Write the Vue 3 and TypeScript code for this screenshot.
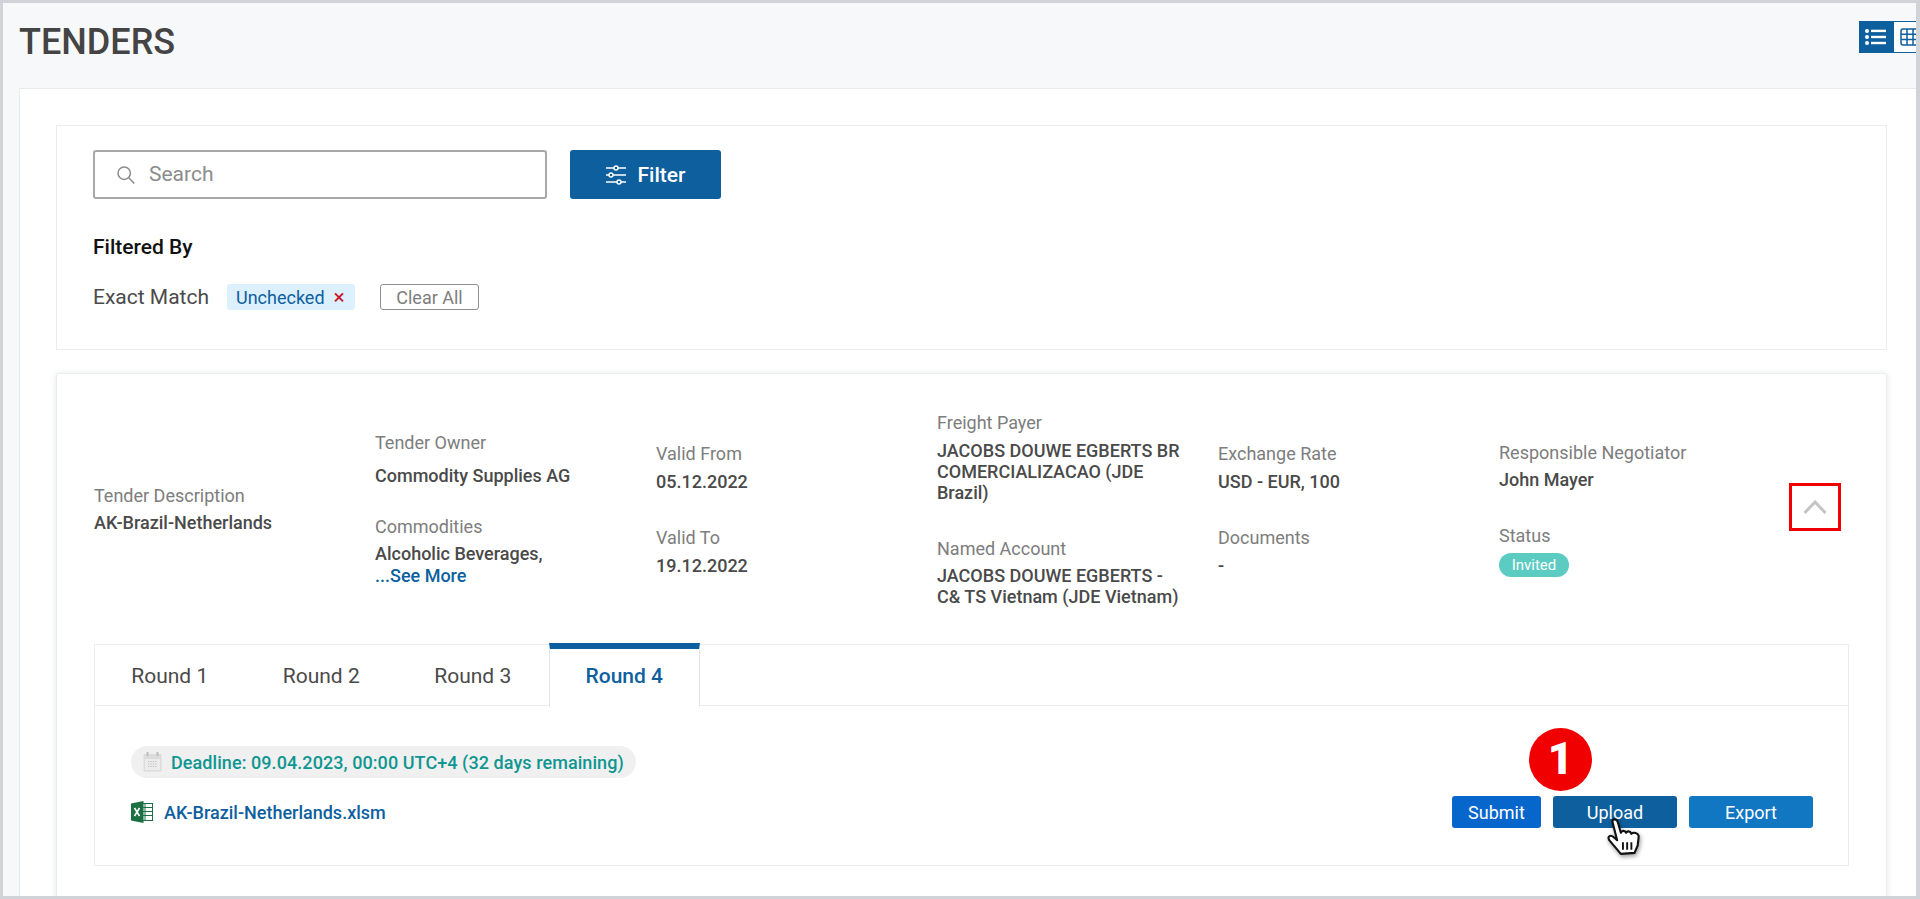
<script setup lang="ts">
import { ref } from "vue";

type Field = { label: string; lines: string[]; more?: string; pill?: string };

const columns: { id: string; gap: string; fields: Field[] }[] = [
  { id: "desc", gap: "0", fields: [{ label: "Tender Description", lines: ["AK-Brazil-Netherlands"] }] },
  {
    id: "owner",
    gap: "gap-a",
    fields: [
      { label: "Tender Owner", lines: ["Commodity Supplies AG"] },
      { label: "Commodities", lines: ["Alcoholic Beverages,"], more: "...See More" }
    ]
  },
  {
    id: "valid",
    gap: "gap-b",
    fields: [
      { label: "Valid From", lines: ["05.12.2022"] },
      { label: "Valid To", lines: ["19.12.2022"] }
    ]
  },
  {
    id: "payer",
    gap: "gap-c",
    fields: [
      { label: "Freight Payer", lines: ["JACOBS DOUWE EGBERTS BR", "COMERCIALIZACAO (JDE", "Brazil)"] },
      { label: "Named Account", lines: ["JACOBS DOUWE EGBERTS -", "C& TS Vietnam (JDE Vietnam)"] }
    ]
  },
  {
    id: "rate",
    gap: "gap-b",
    fields: [
      { label: "Exchange Rate", lines: ["USD - EUR, 100"] },
      { label: "Documents", lines: ["-"] }
    ]
  },
  {
    id: "resp",
    gap: "gap-b",
    fields: [
      { label: "Responsible Negotiator", lines: ["John Mayer"] },
      { label: "Status", lines: [], pill: "Invited" }
    ]
  }
];

const rounds = ["Round 1", "Round 2", "Round 3", "Round 4"];
const activeRound = ref("Round 4");
</script>

<template>
  <div class="frame">
    <header class="top">
      <h1>TENDERS</h1>
      <div class="view-toggle">
        <button type="button" class="view-btn view-btn--on" aria-label="List view">
          <svg width="22" height="18" viewBox="0 0 22 18" fill="#fff">
            <circle cx="2" cy="3" r="2" /><circle cx="2" cy="9" r="2" /><circle cx="2" cy="15" r="2" />
            <rect x="6" y="1.7" width="15" height="2.4" /><rect x="6" y="7.8" width="15" height="2.4" /><rect x="6" y="13.8" width="15" height="2.4" />
          </svg>
        </button>
        <button type="button" class="view-btn" aria-label="Table view">
          <svg width="20" height="18" viewBox="0 0 20 18" fill="none" stroke="#0e5f9e" stroke-width="1.5">
            <rect x="1" y="1" width="18" height="16" rx="2" />
            <path d="M1 6.3h18M1 11.6h18M7 1v16M13 1v16" />
          </svg>
        </button>
      </div>
    </header>

    <main class="panel">
      <section class="filters">
        <div class="search-row">
          <label class="search">
            <svg width="20" height="20" viewBox="0 0 20 20" fill="none" stroke="#8c8c8c" stroke-width="1.5">
              <circle cx="8.2" cy="8.2" r="6.2" /><path d="M12.8 12.8l5.4 5.6" />
            </svg>
            <input type="text" placeholder="Search" />
          </label>
          <button type="button" class="filter-btn">
            <svg width="20" height="20" viewBox="0 0 20 20" fill="none" stroke="#fff" stroke-width="1.4">
              <path d="M0 3h8M12 3h8M0 10h3M7 10h13M0 17h11M15 17h5" />
              <circle cx="10" cy="3" r="2" /><circle cx="5" cy="10" r="2" /><circle cx="13" cy="17" r="2" />
            </svg>
            Filter
          </button>
        </div>
        <div class="filtered-title">Filtered By</div>
        <div class="chips">
          <span class="chips__label">Exact Match</span>
          <span class="chip">Unchecked <span class="chip__x">×</span></span>
          <button type="button" class="clear">Clear All</button>
        </div>
      </section>

      <section class="tender">
        <div class="info">
          <div v-for="col in columns" :key="col.id" class="info__col" :class="col.gap">
            <div v-for="f in col.fields" :key="f.label" class="field" :class="'field--' + col.id">
              <div class="field__label">{{ f.label }}</div>
              <div v-if="f.lines.length" class="field__value">
                <div v-for="line in f.lines" :key="line">{{ line }}</div>
              </div>
              <a v-if="f.more" class="field__more">{{ f.more }}</a>
              <span v-if="f.pill" class="pill">{{ f.pill }}</span>
            </div>
          </div>
          <button type="button" class="collapse" aria-label="Collapse">
            <svg width="24" height="14" viewBox="0 0 24 14" fill="none" stroke="#c4c4c4" stroke-width="3">
              <path d="M1.5 13L12 2l10.5 11" />
            </svg>
          </button>
        </div>

        <div class="rounds">
          <div class="tabs">
            <button v-for="r in rounds" :key="r" type="button" class="tab" :class="{ 'tab--on': r === activeRound }" @click="activeRound = r">
              {{ r }}
            </button>
          </div>
          <div class="rounds__body">
            <div class="rounds__left">
              <div class="deadline">
                <svg width="19" height="20" viewBox="0 0 19 20">
                  <rect x="0.5" y="2" width="18" height="17.5" fill="#dcdcdc" />
                  <rect x="2" y="7" width="15" height="11" fill="#ececec" />
                  <rect x="3.5" y="0" width="2" height="4" fill="#bdbdbd" /><rect x="13.5" y="0" width="2" height="4" fill="#bdbdbd" />
                  <path d="M5 9.5h9M5 12h9M5 14.5h9" stroke="#c2c2c2" stroke-width="1" stroke-dasharray="1.4 1" />
                </svg>
                Deadline: 09.04.2023, 00:00 UTC+4 (32 days remaining)
              </div>
              <a class="file">
                <svg width="22" height="22" viewBox="0 0 22 22">
                  <rect x="8" y="2.5" width="13.5" height="17" fill="#fff" stroke="#1d7044" />
                  <path d="M14 3v16M9 6.5h12M9 10.5h12M9 14.5h12" stroke="#1d7044" stroke-width="1" />
                  <path d="M0 2.5L12.5 0v22L0 19.5z" fill="#1d7044" />
                  <path d="M3.5 7l5 8M8.5 7l-5 8" stroke="#fff" stroke-width="1.6" />
                </svg>
                AK-Brazil-Netherlands.xlsm
              </a>
            </div>
            <div class="actions">
              <button type="button" class="act act--submit">Submit</button>
              <button type="button" class="act act--upload">
                Upload
                <span class="step">1</span>
                <svg class="hand" width="36" height="39" viewBox="0 0 34 37">
                  <path d="M6 4.500C6 1.500 10 1.500 11 4.500L14 15C15 12.500 18 12.500 19 15C20 13 23 13 24 16C26 14 30 15 31 18L30 27L27 34L14 35L3 22C1 18.500 4 16.500 7 19L10.500 22Z" fill="#fff" stroke="#111" stroke-width="2" stroke-linejoin="round" />
                  <path d="M16 24v7M20 24v7M24 24v7" stroke="#111" stroke-width="1.800" />
                </svg>
              </button>
              <button type="button" class="act act--export">Export</button>
            </div>
          </div>
        </div>
      </section>
    </main>
  </div>
</template>

<style>
html,
body {
  margin: 0;
  overflow: hidden;
}
</style>

<style scoped>
.frame {
  box-sizing: border-box;
  height: 899px;
  border: 3px solid #d0d4d8;
  border-right-width: 4px;
  background: #f7f8fa;
  overflow: hidden;
  font-family: Roboto, "Liberation Sans", sans-serif;
  color: #3c3c3c;
}

button {
  font-family: inherit;
  cursor: pointer;
}

.top {
  height: 85px;
  display: flex;
  align-items: flex-start;
  justify-content: space-between;
  padding-left: 16px;
}

.top h1 {
  margin: 19px 0 0;
  font-size: 36px;
  line-height: 40px;
  font-weight: 500;
  color: #444;
}

.view-toggle {
  display: flex;
  margin: 18px -11px 0 0;
}

.view-btn {
  width: 34px;
  height: 32px;
  padding: 0;
  display: grid;
  place-items: center;
  border: 1px solid #0e5f9e;
  background: #fff;
}

.view-btn--on {
  background: #0e5f9e;
}

.panel {
  height: 811px;
  margin-left: 16px;
  padding: 36px 29px 0 36px;
  background: #fff;
  border-top: 1px solid #e8eaec;
  border-left: 1px solid #e8eaec;
}

.filters {
  height: 225px;
  box-sizing: border-box;
  padding: 24px 36px 0;
  border: 1px solid #ebedef;
}

.search-row {
  display: flex;
  gap: 23px;
}

.search {
  box-sizing: border-box;
  width: 454px;
  height: 49px;
  display: flex;
  align-items: center;
  gap: 13px;
  padding-left: 21px;
  border: 2px solid #a8a8a8;
  border-radius: 3px;
}

.search input {
  flex: 1;
  min-width: 0;
  border: 0;
  outline: 0;
  padding: 0 0 2px;
  font: 400 21px Roboto, sans-serif;
}

.search input::placeholder {
  color: #8c8c8c;
}

.filter-btn {
  width: 151px;
  height: 49px;
  display: flex;
  align-items: center;
  justify-content: center;
  gap: 12px;
  border: 0;
  border-radius: 3px;
  background: #0e5f9e;
  color: #fff;
  font-size: 21px;
  font-weight: 500;
}

.filtered-title {
  margin-top: 36px;
  font-size: 21px;
  line-height: 24px;
  font-weight: 500;
  color: #111;
}

.chips {
  margin-top: 25px;
  display: flex;
  align-items: center;
}

.chips__label {
  width: 134px;
  font-size: 21px;
  color: #4a4a4a;
}

.chip {
  box-sizing: border-box;
  width: 128px;
  height: 26px;
  display: flex;
  align-items: center;
  gap: 9px;
  padding-left: 9px;
  border-radius: 3px;
  background: #dcf0fd;
  color: #0e5f9e;
  font-size: 18px;
}

.chip__x {
  color: #c8141e;
  font-size: 21px;
  line-height: 26px;
}

.clear {
  width: 99px;
  height: 26px;
  margin-left: 25px;
  padding: 0;
  border: 1px solid #8f8f8f;
  border-radius: 3px;
  background: #fff;
  color: #7d7d7d;
  font-size: 18px;
}

.tender {
  margin-top: 23px;
  height: 540px;
  padding: 30px 37px 0;
  background: #fff;
  border-radius: 3px 3px 0 0;
  border: 1px solid #ebedef;
  box-shadow: 0 1px 6px rgba(60, 70, 80, 0.14);
}

.info {
  height: 210px;
  display: grid;
  grid-template-columns: repeat(6, 281px) 1fr;
  align-items: center;
}

.info__col {
  display: flex;
  flex-direction: column;
}

.gap-a {
  gap: 30px;
}

.gap-b {
  gap: 35px;
}

.gap-c {
  gap: 35px;
}

.field__label {
  font-size: 18px;
  line-height: 22px;
  color: #7d7d7d;
}

.field__value {
  margin-top: 5px;
  font-size: 18px;
  line-height: 21px;
  font-weight: 500;
  color: #4a4a4a;
  width: 260px;
}

.field--valid .field__value,
.field--rate .field__value {
  margin-top: 6px;
}

.field--payer:first-child .field__value {
  margin-top: 6px;
}

.field--owner:first-child .field__value {
  margin-top: 11px;
}

.field__more {
  display: block;
  font-size: 18px;
  line-height: 23px;
  font-weight: 500;
  color: #0e5f9e;
}

.pill {
  display: inline-block;
  box-sizing: border-box;
  width: 70px;
  height: 24px;
  margin-top: 6px;
  border-radius: 12px;
  background: #5ccbc2;
  color: #fff;
  font-size: 15px;
  line-height: 24px;
  text-align: center;
}

.collapse {
  width: 52px;
  height: 48px;
  margin: -4px 0 0 9px;
  padding: 0;
  display: grid;
  place-items: center;
  border: 3px solid #f00000;
  background: #fff;
}

.rounds {
  margin-top: 30px;
  height: 222px;
  box-sizing: border-box;
  border: 1px solid #ebedef;
  border-top: 0;
}

.tabs {
  display: flex;
  height: 62px;
  box-sizing: border-box;
  border-top: 1px solid #ebedef;
  border-bottom: 1px solid #ebedef;
}

.tab {
  width: 151.5px;
  height: 62px;
  padding: 0;
  border: 0;
  background: none;
  color: #4a4a4a;
  font-size: 21px;
}

.tab:first-child {
  margin-left: -1px;
}

.tab--on {
  margin-top: -2px;
  height: 64px;
  padding-bottom: 5px;
  border-top: 6px solid #0e5f9e;
  border-left: 1px solid #e4e6e8;
  border-right: 1px solid #e4e6e8;
  background: #fff;
  color: #0e5f9e;
  font-weight: 500;
}

.rounds__body {
  display: flex;
  justify-content: space-between;
  padding: 40px 35px 0 36px;
}

.rounds__left {
  display: flex;
  flex-direction: column;
  align-items: flex-start;
}

.deadline {
  height: 32px;
  display: flex;
  align-items: center;
  gap: 9px;
  padding: 0 12px;
  border-radius: 16px;
  background: #f0f0f0;
  color: #0f9690;
  font-size: 18px;
  font-weight: 500;
  letter-spacing: 0.07px;
}

.file {
  margin-top: 23px;
  display: flex;
  align-items: center;
  gap: 11px;
  color: #0e5f9e;
  font-size: 18px;
  font-weight: 500;
}

.actions {
  display: flex;
  gap: 12px;
  margin-top: 50px;
}

.act {
  position: relative;
  width: 124px;
  height: 32px;
  padding: 0;
  border: 0;
  border-radius: 3px;
  color: #fff;
  font-size: 18px;
}

.act--submit {
  width: 89px;
  background: #0666cc;
}

.act--upload {
  background: #0e5f9e;
}

.act--export {
  background: #1177c3;
}

.step {
  position: absolute;
  left: -24px;
  top: -68px;
  width: 63px;
  height: 63px;
  border-radius: 50%;
  background: #f00000;
  color: #fff;
  font-size: 44px;
  font-weight: 900;
  line-height: 63px;
  text-align: center;
}

.hand {
  position: absolute;
  left: 53px;
  top: 21px;
  filter: drop-shadow(1px 2px 2px rgba(0, 0, 0, 0.4));
}
</style>
